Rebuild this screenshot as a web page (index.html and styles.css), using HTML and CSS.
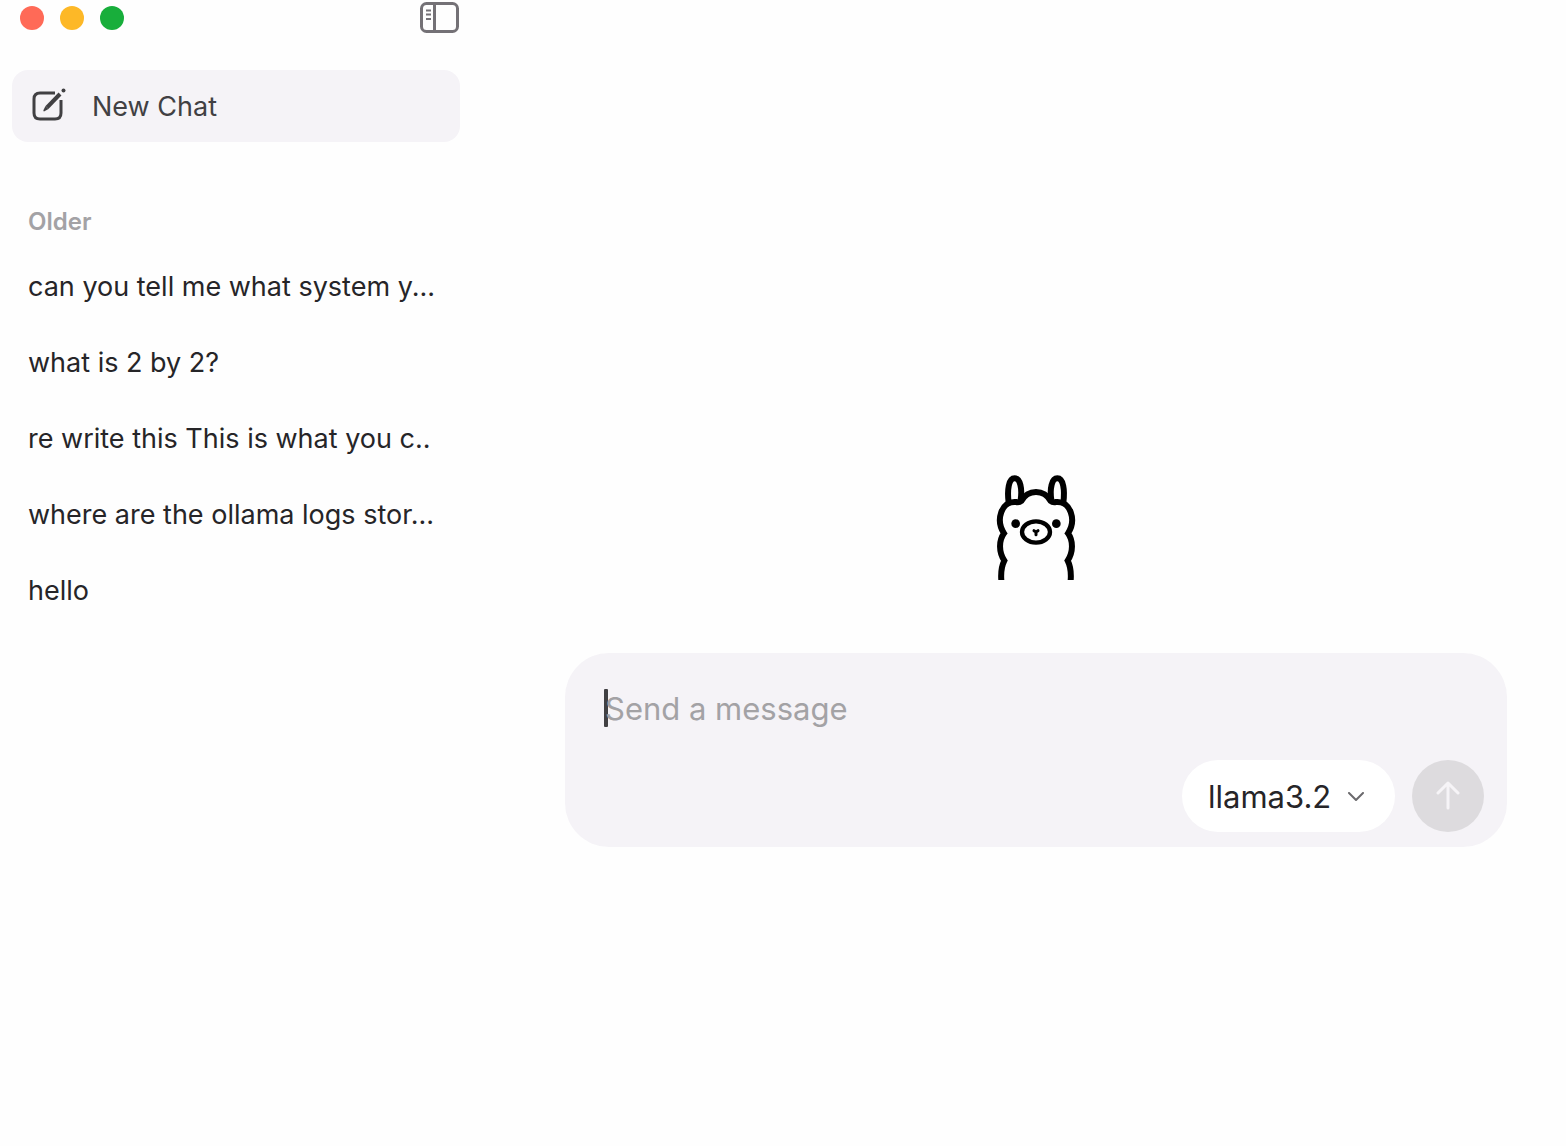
FILE: index.html
```html
<!DOCTYPE html>
<html lang="en">
<head>
    <meta charset="UTF-8">
    <meta name="viewport" content="width=device-width, initial-scale=1.0">
    <title>Ollama</title>
    <link rel="stylesheet" href="styles.css">
</head>
<body>
    <aside class="sidebar">
        <div class="titlebar">
            <div class="window-buttons">
                <button type="button" class="dot dot-close" aria-label="Close"></button>
                <button type="button" class="dot dot-minimize" aria-label="Minimize"></button>
                <button type="button" class="dot dot-zoom" aria-label="Zoom"></button>
            </div>
            <button type="button" class="toggle-sidebar" aria-label="Toggle sidebar">
                <svg width="40" height="32" viewBox="0 0 40 32" fill="none" stroke="#747176">
                    <rect x="1.500" y="1.500" width="36" height="28" rx="5" stroke-width="3"/>
                    <path d="M14.500 2v28" stroke-width="3"/>
                    <path d="M6 8.500h5M6 12.500h5M6 17h5" stroke-width="2"/>
                </svg>
            </button>
        </div>

        <button type="button" class="new-chat">
            <svg width="36" height="36" viewBox="0 0 36 36" fill="none" stroke="#414043" stroke-width="3" stroke-linecap="round">
                <path d="M25 5H10Q4 5 4 11V25Q4 31 10 31H25Q31 31 31 25V12" stroke-linecap="butt"/>
                <path d="M17 19.500L30 6" stroke-width="4" stroke-linecap="butt"/>
                <path d="M15.500 18l3 3-4.500 2.500q-1-.500-.500-1.500z" fill="#414043" stroke="none"/>
                <circle cx="33.500" cy="2.500" r="2" fill="#414043" stroke="none"/>
            </svg>
            <span>New Chat</span>
        </button>

        <h2>Older</h2>
        <nav class="chat-list">
            <a href="#" class="chat-item">can you tell me what system y...</a>
            <a href="#" class="chat-item">what is 2 by 2?</a>
            <a href="#" class="chat-item">re write this This is what you c..</a>
            <a href="#" class="chat-item">where are the ollama logs stor...</a>
            <a href="#" class="chat-item">hello</a>
        </nav>
    </aside>

    <main class="main-content">
        <svg class="llama" width="80" height="105" viewBox="48 31 240 315" fill="none" stroke="#000" stroke-width="18">
            <path d="M86 114C81 76 86 41 104 41C121 41 127 72 122 106"/>
            <path d="M250 114C255 76 250 41 232 41C215 41 209 72 214 106"/>
            <path d="M64 347C62 322 66 302 73 288C56 262 56 228 72 206C46 166 64 108 108 112Q118 114 124 109C144 73 192 73 212 109Q218 114 228 112C272 108 290 166 264 206C280 228 280 262 263 288C270 302 274 322 272 347"/>
            <ellipse cx="168" cy="202" rx="42" ry="32" stroke-width="13"/>
            <path d="M162 198l6 4 6-4M168 201v9" stroke-width="9" stroke-linecap="round"/>
            <circle cx="107" cy="177" r="13" fill="#000" stroke="none"/>
            <circle cx="229" cy="177" r="13" fill="#000" stroke="none"/>
        </svg>

        <form class="composer">
            <div class="message">
                <span class="caret"></span>
                <textarea id="message" rows="1" placeholder="Send a message" aria-label="Send a message"></textarea>
            </div>
            <div class="composer-actions">
                <div class="model">
                    <select id="model" aria-label="Model">
                        <option>llama3.2</option>
                    </select>
                    <svg class="chevron" width="18" height="10" viewBox="0 0 18 10" fill="none" stroke="#6b6a6d" stroke-width="2" stroke-linecap="round" stroke-linejoin="round">
                        <path d="M2 1l7 7 7-7"/>
                    </svg>
                </div>
                <button type="submit" class="send" aria-label="Send">
                    <svg width="24" height="30" viewBox="0 0 24 30" fill="none" stroke="#f6f4f7" stroke-width="3" stroke-linecap="round" stroke-linejoin="round">
                        <path d="M12 27V2M2 12L12 2l10 10"/>
                    </svg>
                </button>
            </div>
        </form>
    </main>
</body>
</html>
```
FILE: styles.css
```css
* {
    box-sizing: border-box;
}

body {
    margin: 0;
    min-height: 100vh;
    display: flex;
    background-color: #fefefe;
    color: #262528;
    font-family: Inter, "Liberation Sans", sans-serif;
}

button {
    border: none;
    padding: 0;
    background: none;
    font: inherit;
    color: inherit;
    cursor: pointer;
}

svg {
    display: block;
}

/* Sidebar */
.sidebar {
    width: 472px;
    flex-shrink: 0;
    padding: 0 12px;
}

.titlebar {
    display: flex;
    align-items: center;
    justify-content: space-between;
    height: 36px;
    padding-left: 8px;
}

.window-buttons {
    display: flex;
    gap: 16px;
}

.dot {
    width: 24px;
    height: 24px;
    border-radius: 50%;
}

.dot-close {
    background-color: #ff6a57;
}

.dot-minimize {
    background-color: #fdb827;
}

.dot-zoom {
    background-color: #18ae3b;
}

.new-chat {
    display: flex;
    align-items: center;
    gap: 26px;
    width: 100%;
    height: 72px;
    margin-top: 34px;
    padding: 0 18px;
    border-radius: 16px;
    background-color: #f5f3f7;
    color: #414043;
    font-size: 27px;
}

.sidebar h2 {
    margin: 64px 0 0;
    padding: 0 16px;
    color: #a3a2a5;
    font-size: 24px;
    font-weight: 600;
    line-height: 32px;
}

.chat-list {
    display: flex;
    flex-direction: column;
    margin-top: 11px;
}

.chat-item {
    padding: 20px 16px;
    color: inherit;
    font-size: 27px;
    line-height: 36px;
    text-decoration: none;
    white-space: nowrap;
}

/* Chat area */
.main-content {
    flex: 1;
    display: flex;
    flex-direction: column;
    align-items: center;
    padding: 475px 59px 0 93px;
}

.composer {
    width: 100%;
    margin-top: 73px;
    padding: 36px 23px 15px 40px;
    border-radius: 44px;
    background-color: #f5f3f7;
}

.message {
    position: relative;
}

.message textarea {
    position: relative;
    display: block;
    width: 100%;
    height: 40px;
    padding: 0;
    border: none;
    outline: none;
    resize: none;
    overflow: hidden;
    background: transparent;
    color: inherit;
    font-family: inherit;
    font-size: 31px;
    line-height: 40px;
}

.message textarea::placeholder {
    color: #a3a2a5;
}

.caret {
    position: absolute;
    top: 0;
    left: -1px;
    width: 4px;
    height: 38px;
    border-radius: 1px;
    background-color: #414043;
}

.composer-actions {
    display: flex;
    justify-content: flex-end;
    gap: 17px;
    margin-top: 31px;
}

.model {
    position: relative;
}

.model select {
    appearance: none;
    height: 72px;
    padding: 0 63px 0 26px;
    border: none;
    border-radius: 36px;
    background-color: #fff;
    color: inherit;
    font-family: inherit;
    font-size: 31px;
}

.chevron {
    position: absolute;
    top: 32px;
    right: 30px;
    pointer-events: none;
}

.send {
    display: flex;
    align-items: center;
    justify-content: center;
    width: 72px;
    height: 72px;
    border-radius: 50%;
    background-color: #dddbde;
}
```
